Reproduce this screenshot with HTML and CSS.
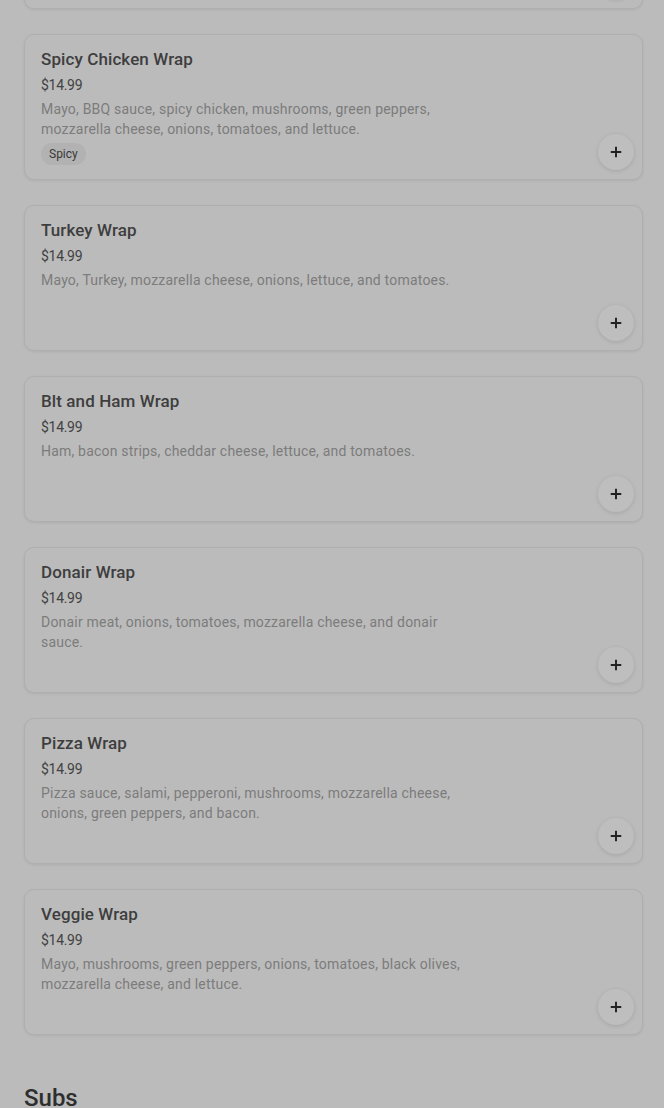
FILE: index.html
```html
<!DOCTYPE html>
<html lang="en">
<head>
<meta charset="utf-8">
<title>Menu</title>
<link rel="stylesheet" href="styles.css">
</head>
<body>
<main class="menu">
  <section class="items">
    <article class="card card-partial">
      <button class="add" aria-label="Add"><svg viewBox="0 0 16 16" width="14" height="14"><path d="M8 2v12M2 8h12" stroke="currentColor" stroke-width="2.2"/></svg></button>
    </article>
    <article class="card">
      <h3 class="name">Spicy Chicken Wrap</h3>
      <div class="price">$14.99</div>
      <p class="desc">Mayo, BBQ sauce, spicy chicken, mushrooms, green peppers, mozzarella cheese, onions, tomatoes, and lettuce.</p>
      <span class="tag">Spicy</span>
      <button class="add" aria-label="Add"><svg viewBox="0 0 16 16" width="14" height="14"><path d="M8 2v12M2 8h12" stroke="currentColor" stroke-width="2.2"/></svg></button>
    </article>
    <article class="card">
      <h3 class="name">Turkey Wrap</h3>
      <div class="price">$14.99</div>
      <p class="desc">Mayo, Turkey, mozzarella cheese, onions, lettuce, and tomatoes.</p>
      <button class="add" aria-label="Add"><svg viewBox="0 0 16 16" width="14" height="14"><path d="M8 2v12M2 8h12" stroke="currentColor" stroke-width="2.2"/></svg></button>
    </article>
    <article class="card">
      <h3 class="name">Blt and Ham Wrap</h3>
      <div class="price">$14.99</div>
      <p class="desc">Ham, bacon strips, cheddar cheese, lettuce, and tomatoes.</p>
      <button class="add" aria-label="Add"><svg viewBox="0 0 16 16" width="14" height="14"><path d="M8 2v12M2 8h12" stroke="currentColor" stroke-width="2.2"/></svg></button>
    </article>
    <article class="card">
      <h3 class="name">Donair Wrap</h3>
      <div class="price">$14.99</div>
      <p class="desc">Donair meat, onions, tomatoes, mozzarella cheese, and donair sauce.</p>
      <button class="add" aria-label="Add"><svg viewBox="0 0 16 16" width="14" height="14"><path d="M8 2v12M2 8h12" stroke="currentColor" stroke-width="2.2"/></svg></button>
    </article>
    <article class="card">
      <h3 class="name">Pizza Wrap</h3>
      <div class="price">$14.99</div>
      <p class="desc">Pizza sauce, salami, pepperoni, mushrooms, mozzarella cheese, onions, green peppers, and bacon.</p>
      <button class="add" aria-label="Add"><svg viewBox="0 0 16 16" width="14" height="14"><path d="M8 2v12M2 8h12" stroke="currentColor" stroke-width="2.2"/></svg></button>
    </article>
    <article class="card">
      <h3 class="name">Veggie Wrap</h3>
      <div class="price">$14.99</div>
      <p class="desc">Mayo, mushrooms, green peppers, onions, tomatoes, black olives, mozzarella cheese, and lettuce.</p>
      <button class="add" aria-label="Add"><svg viewBox="0 0 16 16" width="14" height="14"><path d="M8 2v12M2 8h12" stroke="currentColor" stroke-width="2.2"/></svg></button>
    </article>
  </section>
  <h2 class="section-title">Subs</h2>
</main>
</body>
</html>
```
FILE: styles.css
```css
* { box-sizing: border-box; }
html, body {
  margin: 0;
  padding: 0;
  background: #bbbbbb;
  overflow: hidden;
}
body {
  font-family: Roboto, "Liberation Sans", Arial, sans-serif;
  color: #3a3a3a;
  height: 1108px;
}
.menu {
  padding: 0 21px 0 24px;
}
.items {
  display: flex;
  flex-direction: column;
  gap: 25px;
  margin-top: -137px;
}
.card {
  position: relative;
  height: 146px;
  border: 1px solid #afafaf;
  border-radius: 10px;
  background: #bbbbbb;
  box-shadow: 0 1px 3px rgba(0, 0, 0, 0.07);
  padding: 13px 16px 0 16px;
  display: flex;
  flex-direction: column;
  align-items: flex-start;
}
.name {
  margin: 0;
  font-size: 17px;
  line-height: 22px;
  font-weight: 500;
  letter-spacing: 0.1px;
  color: #3e3e3e;
}
.price {
  margin-top: 5px;
  font-size: 14px;
  line-height: 20px;
  color: #424242;
  letter-spacing: -0.3px;
}
.desc {
  margin: 4px 0 0 0;
  max-width: 432px;
  font-size: 14px;
  line-height: 20px;
  letter-spacing: 0.2px;
  color: #7c7c7c;
}
.tag {
  margin-top: 4px;
  font-size: 12px;
  line-height: 22px;
  padding: 0 8px;
  border-radius: 11px;
  background: #b2b2b2;
  color: #383838;
}
.add {
  position: absolute;
  right: 8px;
  bottom: 9px;
  width: 36px;
  height: 36px;
  border-radius: 50%;
  border: none;
  background: #bebebe;
  box-shadow: 0 1px 4px rgba(0, 0, 0, 0.12);
  color: #222222;
  display: flex;
  align-items: center;
  justify-content: center;
  padding: 0;
}
.section-title {
  margin: 47px 0 0 0;
  font-size: 24px;
  line-height: 32px;
  font-weight: 500;
  color: #2e2e2e;
}
```
